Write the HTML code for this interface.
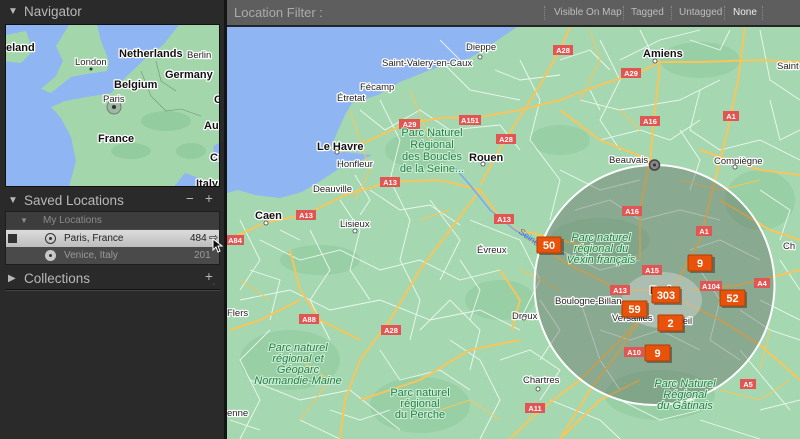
<!DOCTYPE html>
<html><head><meta charset="utf-8">
<style>
*{margin:0;padding:0;box-sizing:border-box}
body{width:800px;height:439px;overflow:hidden;background:#262626;font-family:"Liberation Sans",sans-serif;position:relative}
#left{position:absolute;left:0;top:0;width:224px;height:439px;background:#2a2a2a}
.hdr{position:absolute;left:0;width:224px;height:20px;color:#b8b8b8;font-size:13.5px}
.hdr .tri{position:absolute;left:8px;top:4px;font-size:10px}
.hdr .t{position:absolute;left:24px;top:2px}
#nav{position:absolute;left:5px;top:24px;width:215px;height:163px;border:1px solid #111;overflow:hidden;background:#8fb5f2}
#list{position:absolute;left:5px;top:211px;width:215px;height:54px;background:#4a4a4a;border:1px solid #1e1e1e}
.row{position:absolute;left:0;width:213px;height:17px;font-size:10px;line-height:17px}
#sep{position:absolute;left:224px;top:0;width:3px;height:439px;background:#151515}
#top{position:absolute;left:227px;top:0;width:573px;height:26px;background:#5e5e5e;border-bottom:1px solid #222}
#top .lf{position:absolute;left:7px;top:5px;color:#ababab;font-size:13px}
#top .f{position:absolute;top:7px;font-size:10px;color:#bdbdbd}
#top .d{position:absolute;top:6px;width:0;height:14px;border-left:1px dotted #888}
#map{position:absolute;left:227px;top:27px}
text{font-family:"Liberation Sans",sans-serif}
.lb{font-size:9.5px;fill:#222;stroke:#fff;stroke-width:2.5px;paint-order:stroke;stroke-linejoin:round}
.lbb{font-size:11px;font-weight:bold;fill:#111;stroke:#fff;stroke-width:2.5px;paint-order:stroke;stroke-linejoin:round}
.pk{font-size:11px;fill:#237f42;stroke:#cfeed8;stroke-width:2px;paint-order:stroke;text-anchor:middle}
.pki{font-size:11px;font-style:italic;fill:#237f42;stroke:#cfeed8;stroke-width:2px;paint-order:stroke;text-anchor:middle}
.sh rect{fill:#e15552}
.sh text{font-size:7.5px;font-weight:bold;fill:#fff;text-anchor:middle}
.mk rect.a{fill:#e8520a;stroke:#b23c00;stroke-width:1}
.mk text{font-size:11px;font-weight:bold;fill:#fff;text-anchor:middle}
</style></head><body>
<div id="left">
 <div class="hdr" style="top:2px"><span class="tri">▼</span><span class="t">Navigator</span></div>
 <div id="nav">
  <svg width="215" height="163" viewBox="5 24 215 163">
   <rect x="0" y="0" width="230" height="200" fill="#8fb5f2"/>
   <polygon fill="#a3d7ab" points="0,35 25,30 32,50 20,62 0,60"/>
   <polygon fill="#a3d7ab" points="68,24 96,24 100,40 108,60 106,70 86,73 70,76 50,92 40,88 55,75 62,60 55,45"/>
   <polygon fill="#a3d7ab" points="225,24 178,24 162,44 146,56 126,75 110,92 86,96 64,100 50,106 60,117 70,136 75,160 68,186 225,186"/>
   <polygon fill="#8fb5f2" points="172,187 184,172 198,177 212,187"/>
   <polygon fill="#8fb5f2" points="212,145 222,140 222,165 214,160"/>
   <g fill="#93cc9e"><ellipse cx="165" cy="120" rx="25" ry="10"/><ellipse cx="190" cy="150" rx="15" ry="8"/><ellipse cx="130" cy="150" rx="20" ry="8"/></g>
   <g fill="none" stroke="#6f8f78" stroke-width=".6"><path d="M140,70 L150,95 L165,110 L180,108 L200,115"/><path d="M155,60 L160,80 L175,90"/></g>
   <circle cx="113" cy="106" r="7" fill="#999" fill-opacity=".5" stroke="#777"/>
   <circle cx="113" cy="106" r="2" fill="#333"/>
   <circle cx="90" cy="68" r="1.5" fill="#333"/>
   <text x="5" y="50" class="lbb" font-size="10">eland</text>
   <text x="118" y="56" class="lbb" font-size="10">Netherlands</text>
   <text x="186" y="57" class="lb" font-size="8">Berlin</text>
   <text x="74" y="64" class="lb" font-size="8.5">London</text>
   <text x="164" y="77" class="lbb" font-size="10">Germany</text>
   <text x="113" y="87" class="lbb" font-size="10">Belgium</text>
   <text x="102" y="101" class="lb" font-size="8.5">Paris</text>
   <text x="97" y="141" class="lbb" font-size="10">France</text>
   <text x="203" y="128" class="lbb" font-size="10">Aus</text>
   <text x="213" y="102" class="lbb" font-size="10">C</text>
   <text x="209" y="160" class="lbb" font-size="10">Cr</text>
   <text x="195" y="186" class="lbb" font-size="10">Italy</text>
  </svg>
 </div>
 <div class="hdr" style="top:191px"><span class="tri">▼</span><span class="t">Saved Locations</span><span style="position:absolute;left:186px;top:0">−</span><span style="position:absolute;left:205px;top:0">+</span></div>
 <div id="list">
  <div class="row" style="top:0;background:#3d3d3d;color:#8c8c8c"><span style="position:absolute;left:14px;font-size:8px">▼</span><span style="position:absolute;left:37px">My Locations</span></div>
  <div class="row" style="top:18px;background:linear-gradient(#dcdcdc,#bdbdbd);color:#222">
   <span style="position:absolute;left:2px;top:4px;width:9px;height:9px;background:#333"></span>
   <span style="position:absolute;left:39px;top:3px;width:11px;height:11px;border:1px solid #333;border-radius:50%"></span>
   <span style="position:absolute;left:43px;top:7px;width:3px;height:3px;background:#333;border-radius:50%"></span>
   <span style="position:absolute;left:58px">Paris, France</span><span style="position:absolute;left:184px">484</span>
   <span style="position:absolute;left:203px;top:0;font-size:11px">⇨</span>
  </div>
  <div class="row" style="top:35px;color:#9a9a9a">
   <span style="position:absolute;left:39px;top:3px;width:11px;height:11px;background:#c8c8c8;border-radius:50%"></span>
   <span style="position:absolute;left:43px;top:7px;width:3px;height:3px;background:#333;border-radius:50%"></span>
   <span style="position:absolute;left:58px">Venice, Italy</span><span style="position:absolute;left:188px">201</span>
  </div>
 </div>
 <svg style="position:absolute;left:212px;top:238px" width="12" height="16"><path d="M1,1 L1,12 L4,9 L6,14 L8,13 L6,8 L10,8 Z" fill="#111" stroke="#fff" stroke-width="1"/></svg>
 <div class="hdr" style="top:269px"><span class="tri">▶</span><span class="t">Collections</span><span style="position:absolute;left:205px;top:0">+<sub style="font-size:7px">.</sub></span></div>
 <div style="position:absolute;left:5px;top:289px;width:215px;height:2px;background:#111;border-bottom:1px solid #444"></div>
</div>
<div id="sep"></div>
<div id="top">
 <span class="lf">Location Filter :</span>
 <span class="d" style="left:317px"></span><span class="f" style="left:327px">Visible On Map</span>
 <span class="d" style="left:396px"></span><span class="f" style="left:404px">Tagged</span>
 <span class="d" style="left:444px"></span><span class="f" style="left:452px">Untagged</span>
 <span class="d" style="left:497px"></span><span class="f" style="left:506px;color:#eee">None</span>
 <span class="d" style="left:535px"></span>
</div>
<svg id="map" width="573" height="412" viewBox="227 27 573 412">
 <rect x="227" y="27" width="573" height="412" fill="#a5d8b1"/>
 <g fill="#95cda2" opacity=".8">
  <ellipse cx="420" cy="150" rx="35" ry="18"/><ellipse cx="290" cy="360" rx="50" ry="30"/>
  <ellipse cx="420" cy="405" rx="50" ry="28"/><ellipse cx="600" cy="240" rx="50" ry="22"/>
  <ellipse cx="660" cy="395" rx="55" ry="25"/><ellipse cx="560" cy="140" rx="30" ry="15"/>
  <ellipse cx="700" cy="60" rx="40" ry="18"/><ellipse cx="760" cy="200" rx="35" ry="30"/>
  <ellipse cx="320" cy="260" rx="40" ry="15"/><ellipse cx="500" cy="300" rx="35" ry="20"/>
 </g>
 <polygon fill="#8fb5f2" points="227,27 517,27 492,44 470,58 430,70 400,82 378,95 352,103 345,115 336,135 330,150 345,152 372,155 360,161 340,168 322,180 302,192 280,198 255,195 238,190 227,193"/>
 <g fill="none" stroke="#ffffff" stroke-width="0.9" opacity=".8">
  <path d="M260,240 L300,260 L340,250 L380,270 L420,260 L460,280 L500,270"/>
  <path d="M240,300 L290,290 L330,310 L380,300 L430,320 L480,310 L520,330"/>
  <path d="M380,100 L400,140 L390,180 L410,220 L400,260 L420,300 L410,340"/>
  <path d="M520,60 L540,100 L530,140 L560,180 L550,220"/>
  <path d="M600,40 L620,80 L600,120 L620,150"/><path d="M700,90 L690,130 L720,150 L760,140 L800,160"/>
  <path d="M580,100 L620,110 L680,100 L720,80"/><path d="M560,170 L600,190 L640,180"/>
  <path d="M250,380 L300,400 L350,390 L400,430"/><path d="M450,340 L480,360 L500,400 L480,439"/>
  <path d="M440,60 L470,90 L520,100"/><path d="M340,200 L360,230 L350,270 L370,300"/>
  <path d="M270,330 L240,360 L260,400 L240,439"/><path d="M760,300 L800,320"/><path d="M740,350 L790,410"/>
  <path d="M470,220 L520,240 L540,280 L520,320"/><path d="M430,200 L460,240 L440,280"/>
  <path d="M300,420 L340,439"/><path d="M550,400 L600,420 L620,439"/><path d="M700,420 L760,439"/>
  <path d="M760,30 L770,80 L800,100"/><path d="M620,60 L660,40 L700,30"/>
  <path d="M360,110 L385,130 L420,110 L450,130 L500,125 L520,150"/>
  <path d="M370,190 L400,210 L430,205 L460,225"/><path d="M310,230 L330,270 L310,300 L330,340"/>
  <path d="M250,270 L280,280 L270,320"/><path d="M240,220 L260,260 L240,290"/>
  <path d="M420,330 L450,300 L480,330 L470,370"/><path d="M380,350 L400,380 L440,370 L470,390"/>
  <path d="M500,360 L530,350 L560,370 L540,400"/><path d="M540,300 L560,330 L540,360"/>
  <path d="M560,60 L590,50 L610,70"/><path d="M690,40 L720,50 L730,30"/><path d="M770,100 L780,140 L800,130"/>
  <path d="M680,130 L700,160 L690,190"/><path d="M760,190 L790,210 L780,240"/><path d="M780,260 L800,290"/>
  <path d="M600,140 L640,130 L670,140 L700,120"/><path d="M575,210 L610,200 L640,220 L680,210 L720,220"/>
  <path d="M560,250 L600,270 L640,260"/><path d="M690,250 L720,240 L760,260"/><path d="M600,330 L630,340 L660,330 L700,350"/>
  <path d="M580,300 L600,360 L620,390"/><path d="M700,270 L720,300 L710,340 L740,360"/>
  <path d="M620,400 L660,420 L700,410"/><path d="M760,410 L800,400"/><path d="M740,310 L770,330 L800,340"/>
  <path d="M440,40 L460,60"/><path d="M495,70 L520,80 L560,75"/><path d="M590,90 L600,110"/>
  <path d="M355,175 L370,200 L360,215"/><path d="M280,230 L300,240"/><path d="M460,260 L480,290 L470,320"/>
  <path d="M330,410 L360,420 L390,410"/><path d="M230,420 L260,430"/><path d="M640,30 L650,50"/>
 </g>
 <g fill="none" stroke="#f7c55a" stroke-width="2" stroke-linejoin="round">
  <path d="M340,152 L370,140 L405,124 L440,118 L480,117 L520,110 L560,100 L600,85 L640,72 L660,62 L700,62 L760,60 L800,62"/>
  <path d="M267,222 L305,215 L345,195 L390,182 L440,180 L480,190 L500,218 L530,240 L570,265 L620,290 L650,290"/>
  <path d="M480,185 L505,140 L540,85 L560,50 L570,27"/>
  <path d="M480,190 L450,230 L420,270 L390,320 L360,360 L345,400 L340,439"/>
  <path d="M660,62 L655,110 L650,160 L640,210 L640,260"/>
  <path d="M745,27 L738,80 L730,120 L715,180 L700,240 L675,285"/>
  <path d="M267,222 L227,240"/><path d="M290,250 L300,290 L320,320 L360,340"/>
  <path d="M640,320 L620,350 L590,390 L560,439"/><path d="M640,320 L580,380 L540,410 L510,439"/>
  <path d="M680,300 L720,320 L760,345 L800,380"/><path d="M690,290 L740,285 L800,270"/>
  <path d="M560,110 L600,140 L650,160"/><path d="M700,150 L760,170 L800,175"/>
  <path d="M500,270 L520,300 L512,330"/><path d="M360,400 L420,380 L470,350 L520,340"/>
  <path d="M600,250 L560,240 L520,230"/><path d="M720,200 L770,230 L800,240"/>
  <path d="M300,300 L260,320 L230,330"/><path d="M560,439 L600,400 L640,380"/>
 </g>
 <g fill="none" stroke="#f7c55a" stroke-width="1" stroke-linejoin="round">
  <path d="M350,110 L370,170 L355,200"/><path d="M410,90 L430,140"/><path d="M590,30 L600,60 L580,100"/>
  <path d="M680,180 L720,190 L760,180"/><path d="M300,360 L330,380 L300,420"/><path d="M520,270 L560,290"/>
  <path d="M440,410 L470,400 L500,420"/><path d="M720,390 L760,400 L790,380"/><path d="M620,110 L640,130"/>
  <path d="M240,280 L270,300"/><path d="M420,220 L450,210"/><path d="M770,330 L760,370"/>
 </g>
 <path d="M455,168 L470,185 L490,210 L515,230 L540,245" fill="none" stroke="#7aa6f0" stroke-width="1.5"/>
 <circle cx="654.5" cy="285" r="120" fill="#555" fill-opacity=".35" stroke="#fff" stroke-width="2"/>
 <ellipse cx="662" cy="300" rx="40" ry="28" fill="#d8d8d8" opacity=".45"/>
 <circle cx="654.5" cy="165" r="5" fill="#888" stroke="#444" stroke-width="1.5"/><circle cx="654.5" cy="165" r="1.5" fill="#333"/>
 <g class="sh">
  <rect x="553" y="45" width="20" height="10"/><text x="563" y="53">A28</text>
  <rect x="399" y="119" width="21" height="10"/><text x="409.5" y="127">A29</text>
  <rect x="459" y="115" width="22" height="10"/><text x="470" y="123">A151</text>
  <rect x="496" y="134" width="20" height="10"/><text x="506" y="142">A28</text>
  <rect x="380" y="177" width="20" height="10"/><text x="390" y="185">A13</text>
  <rect x="296" y="210" width="20" height="10"/><text x="306" y="218">A13</text>
  <rect x="494" y="214" width="20" height="10"/><text x="504" y="222">A13</text>
  <rect x="227" y="235" width="17" height="10"/><text x="235" y="243">A84</text>
  <rect x="621" y="68" width="20" height="10"/><text x="631" y="76">A29</text>
  <rect x="640" y="116" width="20" height="10"/><text x="650" y="124">A16</text>
  <rect x="723" y="111" width="16" height="10"/><text x="731" y="119">A1</text>
  <rect x="622" y="206" width="20" height="10"/><text x="632" y="214">A16</text>
  <rect x="696" y="226" width="16" height="10"/><text x="704" y="234">A1</text>
  <rect x="642" y="265" width="20" height="10"/><text x="652" y="273">A15</text>
  <rect x="610" y="285" width="20" height="10"/><text x="620" y="293">A13</text>
  <rect x="700" y="281" width="22" height="10"/><text x="711" y="289">A104</text>
  <rect x="754" y="278" width="16" height="10"/><text x="762" y="286">A4</text>
  <rect x="624" y="347" width="20" height="10"/><text x="634" y="355">A10</text>
  <rect x="740" y="379" width="16" height="10"/><text x="748" y="387">A5</text>
  <rect x="299" y="314" width="20" height="10"/><text x="309" y="322">A88</text>
  <rect x="381" y="325" width="20" height="10"/><text x="391" y="333">A28</text>
  <rect x="525" y="403" width="20" height="10"/><text x="535" y="411">A11</text>
 </g>
 <text x="466" y="50" class="lb">Dieppe</text>
 <text x="382" y="66" class="lb">Saint-Valery-en-Caux</text>
 <text x="360" y="90" class="lb">Fécamp</text>
 <text x="337" y="101" class="lb">Étretat</text>
 <text x="317" y="150" class="lbb">Le Havre</text>
 <text x="337" y="167" class="lb">Honfleur</text>
 <text x="313" y="192" class="lb">Deauville</text>
 <text x="255" y="219" class="lbb">Caen</text>
 <text x="340" y="227" class="lb">Lisieux</text>
 <text x="469" y="161" class="lbb">Rouen</text>
 <text x="477" y="253" class="lb">Évreux</text>
 <text x="643" y="57" class="lbb">Amiens</text>
 <text x="609" y="163" class="lb">Beauvais</text>
 <text x="714" y="164" class="lb">Compiègne</text>
 <text x="777" y="69" class="lb">Saint</text>
 <text x="523" y="383" class="lb">Chartres</text>
 <text x="512" y="319" class="lb">Dreux</text>
 <text x="227" y="316" class="lb">Flers</text>
 <text x="227" y="416" class="lb">enne</text>
 <text x="783" y="249" class="lb">Ch</text>
 <text x="555" y="304" class="lb" font-size="10.5">Boulogne-Billan</text>
 <text x="612" y="321" class="lb" font-size="10.5">Versailles</text>
 <text x="680" y="324" class="lb" font-size="10.5">teil</text>
 <text x="650" y="294" class="lbb" font-size="13">Paris</text>
 <text x="518" y="233" font-size="9" fill="#3b6fd8" transform="rotate(35 518 233)">Seine</text>
 <g fill="#fff" stroke="#444" stroke-width=".8">
 <circle cx="480" cy="57" r="2"/><circle cx="337" cy="152" r="2"/><circle cx="266" cy="223" r="2"/>
 <circle cx="483" cy="164" r="2"/><circle cx="655" cy="61" r="2"/><circle cx="355" cy="231" r="2"/>
 <circle cx="524" cy="318" r="2"/><circle cx="538" cy="389" r="2"/><circle cx="735" cy="167" r="2"/>
 </g>
 <text class="pk"><tspan x="432" y="136">Parc Naturel</tspan><tspan x="432" y="148">Régional</tspan><tspan x="432" y="160">des Boucles</tspan><tspan x="432" y="172">de la Seine...</tspan></text>
 <text class="pki"><tspan x="298" y="351">Parc naturel</tspan><tspan x="298" y="362">régional et</tspan><tspan x="298" y="373">Géoparc</tspan><tspan x="298" y="384">Normandie-Maine</tspan></text>
 <text class="pk"><tspan x="420" y="396">Parc naturel</tspan><tspan x="420" y="407">régional</tspan><tspan x="420" y="418">du Perche</tspan></text>
 <text class="pki"><tspan x="601" y="241">Parc naturel</tspan><tspan x="601" y="252">régional du</tspan><tspan x="601" y="263">Vexin français</tspan></text>
 <text class="pki"><tspan x="685" y="387">Parc Naturel</tspan><tspan x="685" y="398">Régional</tspan><tspan x="685" y="409">du Gâtinais</tspan></text>
 <g class="mk">
  <rect x="539" y="239" width="25" height="16" fill="#333" opacity=".5"/><rect class="a" x="537" y="237" width="24" height="16" rx="1"/><text x="549" y="249">50</text>
  <rect x="690" y="257" width="25" height="16" fill="#333" opacity=".5"/><rect class="a" x="688" y="255" width="24" height="16" rx="1"/><text x="700" y="267">9</text>
  <rect x="654" y="289" width="28" height="16" fill="#333" opacity=".5"/><rect class="a" x="652" y="287" width="28" height="16" rx="1"/><text x="666" y="299">303</text>
  <rect x="722" y="292" width="25" height="16" fill="#333" opacity=".5"/><rect class="a" x="720" y="290" width="25" height="16" rx="1"/><text x="732.5" y="302">52</text>
  <rect x="624" y="303" width="25" height="16" fill="#333" opacity=".5"/><rect class="a" x="622" y="301" width="25" height="16" rx="1"/><text x="634.5" y="313">59</text>
  <rect x="660" y="317" width="25" height="16" fill="#333" opacity=".5"/><rect class="a" x="658" y="315" width="25" height="16" rx="1"/><text x="670.5" y="327">2</text>
  <rect x="647" y="347" width="25" height="16" fill="#333" opacity=".5"/><rect class="a" x="645" y="345" width="25" height="16" rx="1"/><text x="657.5" y="357">9</text>
 </g>
</svg>
</body></html>
